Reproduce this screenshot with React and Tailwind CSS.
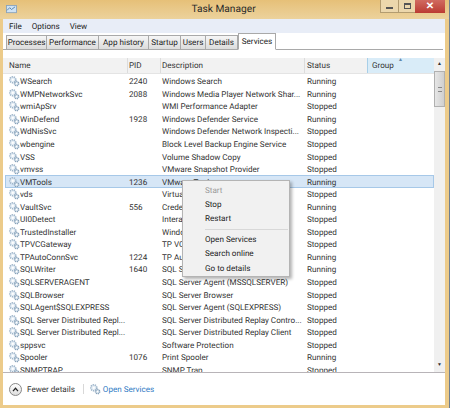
import React from "react";

const F = { fontFamily: 'Roboto, "Open Sans", sans-serif' };

const rows = [
  ["WSearch", "2240", "Windows Search", "Running"],
  ["WMPNetworkSvc", "2088", "Windows Media Player Network Shar...", "Running"],
  ["wmiApSrv", "", "WMI Performance Adapter", "Stopped"],
  ["WinDefend", "1928", "Windows Defender Service", "Running"],
  ["WdNisSvc", "", "Windows Defender Network Inspecti...", "Stopped"],
  ["wbengine", "", "Block Level Backup Engine Service", "Stopped"],
  ["VSS", "", "Volume Shadow Copy", "Stopped"],
  ["vmvss", "", "VMware Snapshot Provider", "Stopped"],
  ["VMTools", "1236", "VMware Tools", "Running"],
  ["vds", "", "Virtual Disk", "Stopped"],
  ["VaultSvc", "556", "Credential Manager", "Running"],
  ["UI0Detect", "", "Interactive Services Detection", "Stopped"],
  ["TrustedInstaller", "", "Windows Modules Installer", "Stopped"],
  ["TPVCGateway", "", "TP VC Gateway Service", "Stopped"],
  ["TPAutoConnSvc", "1224", "TP AutoConnect Service", "Running"],
  ["SQLWriter", "1640", "SQL Server VSS Writer", "Running"],
  ["SQLSERVERAGENT", "", "SQL Server Agent (MSSQLSERVER)", "Stopped"],
  ["SQLBrowser", "", "SQL Server Browser", "Stopped"],
  ["SQLAgent$SQLEXPRESS", "", "SQL Server Agent (SQLEXPRESS)", "Stopped"],
  ["SQL Server Distributed Repl...", "", "SQL Server Distributed Replay Contro...", "Stopped"],
  ["SQL Server Distributed Repl...", "", "SQL Server Distributed Replay Client", "Stopped"],
  ["sppsvc", "", "Software Protection", "Stopped"],
  ["Spooler", "1076", "Print Spooler", "Running"],
  ["SNMPTRAP", "", "SNMP Trap", "Stopped"],
];

function Gear({ className = "" }) {
  return (
    <svg viewBox="0 0 12 12" className={`w-3 h-3 shrink-0 ${className}`}>
      <circle cx="4.8" cy="4.8" r="3" fill="#e4edf5" stroke="#9db4c9" strokeWidth="1.6" strokeDasharray="1.3 0.8" />
      <circle cx="4.8" cy="4.8" r="1.1" fill="#ffffff" />
      <circle cx="8.6" cy="8.6" r="2.2" fill="#cfdce8" stroke="#86a0b8" strokeWidth="1.3" strokeDasharray="1.1 0.7" />
      <circle cx="8.6" cy="8.6" r="0.8" fill="#ffffff" />
    </svg>
  );
}

function Tab({ children, w }) {
  return (
    <div className={`${w} h-[14px] shrink-0 whitespace-nowrap flex items-center justify-center border border-[#a9a9a9] border-l-0 border-b-0 first:border-l bg-gradient-to-b from-[#f6f6f6] to-[#dcdcdc] text-[8.1px] text-[#222]`}>
      {children}
    </div>
  );
}

function MenuItem({ children, gray }) {
  return (
    <div className={`h-[14.4px] flex items-center pl-[22px] text-[8.1px] ${gray ? "text-[#9a9a9a]" : "text-[#222]"}`}>
      {children}
    </div>
  );
}

export default function App() {
  return (
    <div style={F} className="relative w-[450px] h-[408px] overflow-hidden flex flex-col bg-[#eccb8a] border-r border-[#6f7f92] leading-none [text-rendering:geometricPrecision]">
      {/* Title bar */}
      <div className="h-[19px] shrink-0 flex items-center pl-[6px] bg-gradient-to-b from-[#e6c078] to-[#ecd29c]">
        <svg viewBox="0 0 12 10" className="w-[11px] h-[9px] shrink-0">
          <rect x="0.5" y="0.5" width="11" height="8" fill="#cfe2f3" stroke="#8aa4bc" />
          <path d="M1 6 L4 3 L6 5 L10 2" stroke="#4f7ea8" fill="none" />
        </svg>
        <div className="flex-1 text-center text-[10.2px] text-[#2a2a2a] pl-[50px] pt-[1px]">Task Manager</div>
        <div className="flex self-start mr-[4px]">
          <div className="w-[18px] h-[13px] flex items-end justify-center pb-[3px] border border-[#b39c70] border-t-0 border-r-0 bg-[#ecd7ac]">
            <div className="w-[7px] h-[2px] bg-[#555]" />
          </div>
          <div className="w-[17px] h-[13px] flex items-center justify-center border border-[#b39c70] border-t-0 border-r-0 bg-[#ecd7ac]">
            <div className="w-[7px] h-[6px] border border-[#555] border-t-2" />
          </div>
          <div className="w-[30px] h-[13px] flex items-center justify-center bg-gradient-to-b from-[#d06a60] to-[#bb3a32] text-white text-[10px] font-bold">
            ✕
          </div>
        </div>
      </div>

      {/* Client */}
      <div className="flex-1 min-h-0 ml-[3px] mr-[4px] mb-[3px] bg-white flex flex-col">
        {/* Menu */}
        <div className="h-[14px] shrink-0 flex items-center gap-[10px] pl-[6px] bg-[#e8edf7] text-[8.1px] text-[#222]">
          <span>File</span>
          <span>Options</span>
          <span>View</span>
        </div>

        {/* Tabs */}
        <div className="h-[17px] shrink-0 flex items-end pl-[3px] mr-[2px] bg-white border-b border-[#a9a9a9]">
          <Tab w="w-[41px]">Processes</Tab>
          <Tab w="w-[52px]">Performance</Tab>
          <Tab w="w-[50px]">App history</Tab>
          <Tab w="w-[32px]">Startup</Tab>
          <Tab w="w-[25px]">Users</Tab>
          <Tab w="w-[32px]">Details</Tab>
          <div className="w-[38px] h-[17px] -mb-[1px] flex items-start pt-[3px] justify-center border border-[#a9a9a9] border-b-white bg-white text-[8.1px] text-[#222]">
            Services
          </div>
        </div>

        {/* Spacer */}
        <div className="h-[8px] shrink-0" />

        {/* Table */}
        <div className="flex-1 min-h-0 flex">
          <div className="w-[431px] shrink-0 flex flex-col overflow-hidden">
            <div className="h-[16px] shrink-0 flex items-center text-[8.1px] text-[#333] bg-[#f2f2f2] border-b border-[#e4e4e4]">
              <div className="w-[125px] pl-[6px] h-full flex items-center border-r border-[#dcdcdc]">Name</div>
              <div className="w-[33px] pl-[1px] h-full flex items-center border-r border-[#dcdcdc]">PID</div>
              <div className="w-[144px] pl-[1px] h-full flex items-center border-r border-[#dcdcdc]">Description</div>
              <div className="w-[62px] pl-[2px] h-full flex items-center">Status</div>
              <div className="relative flex-1 pl-[4px] h-full flex items-center bg-[#d9ecf8] border-l border-[#a8cfe8]">
                Group
                <span className="absolute top-0 left-[30px] text-[5px] text-[#5f87a8]">▲</span>
              </div>
            </div>
            <div className="h-[299px] shrink-0 overflow-hidden pt-[1px]">
              {rows.map((r, i) => (
                <div
                  key={i}
                  className={`h-[12.55px] flex items-center text-[8.1px] text-[#333] whitespace-nowrap ${r[0] === "VMTools" ? "bg-[#d6e6f6] outline outline-1 -outline-offset-1 outline-[#a6c8e8] ml-[2px]" : ""}`}
                >
                  <div className={`${r[0] === "VMTools" ? "w-[123px] pl-[3px]" : "w-[125px] pl-[5px]"} flex items-center shrink-0`}>
                    <Gear />
                    <span>{r[0]}</span>
                  </div>
                  <div className="w-[33px] pl-[1px] shrink-0">{r[1]}</div>
                  <div className="w-[144px] pl-[1px] shrink-0">{r[2]}</div>
                  <div className="w-[62px] pl-[2px] shrink-0">{r[3]}</div>
                </div>
              ))}
            </div>
          </div>

          {/* Scrollbar */}
          <div className="w-[11px] shrink-0 flex flex-col bg-[#f0f0f0]">
            <div className="h-[13px] flex items-center justify-center text-[5px] text-[#333]">▲</div>
            <div className="h-[36px] flex items-center justify-center bg-gradient-to-r from-[#e6e6e6] to-[#cfcfcf] border border-[#b0b0b0]">
              <div className="w-[4px] h-[5px] border-y border-[#888]" />
            </div>
            <div className="flex-1" />
            <div className="h-[14px] flex items-center justify-center text-[5px] text-[#333]">▼</div>
          </div>
        </div>

        {/* Footer */}
        <div className="h-[33px] shrink-0 flex items-center pl-[6px] border-t border-[#b8b4b8] bg-white text-[8.1px]">
          <div className="w-[13px] h-[13px] rounded-full border border-[#888] bg-gradient-to-b from-white to-[#ddd] flex items-center justify-center">
            <svg viewBox="0 0 8 6" className="w-[7px] h-[5px]">
              <path d="M1 5 L4 1.5 L7 5" fill="none" stroke="#222" strokeWidth="1.4" />
            </svg>
          </div>
          <span className="ml-[5px] text-[#333]">Fewer details</span>
          <div className="w-px h-[10px] bg-[#d8d8d8] ml-[8px] mr-[5px]" />
          <Gear />
          <span className="ml-[2px] text-[#2f7ac4]">Open Services</span>
        </div>
      </div>

      {/* Context menu */}
      <div className="absolute left-[182px] top-[180px] w-[108px] h-[97px] bg-[#f1f1f1] border border-[#b4b4b4] shadow-[2px_2px_3px_rgba(0,0,0,0.3)] pt-[1.5px]">
        <MenuItem gray>Start</MenuItem>
        <MenuItem>Stop</MenuItem>
        <MenuItem>Restart</MenuItem>
        <div className="h-px bg-[#d8d8d8] ml-[22px] mr-[1px] mt-[3px] mb-[2px]" />
        <MenuItem>Open Services</MenuItem>
        <MenuItem>Search online</MenuItem>
        <MenuItem>Go to details</MenuItem>
      </div>
    </div>
  );
}
